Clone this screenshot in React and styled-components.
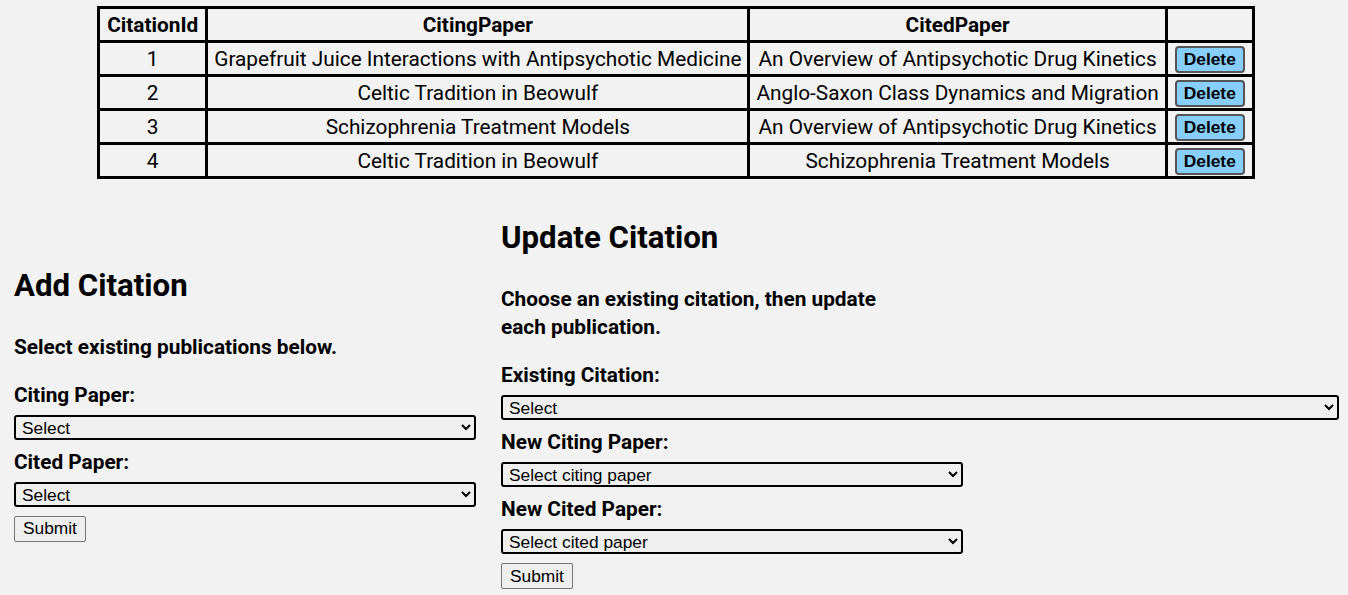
import styled, { createGlobalStyle } from 'styled-components';

const citations = [
    { id: 1, citing: 'Grapefruit Juice Interactions with Antipsychotic Medicine', cited: 'An Overview of Antipsychotic Drug Kinetics' },
    { id: 2, citing: 'Celtic Tradition in Beowulf', cited: 'Anglo-Saxon Class Dynamics and Migration' },
    { id: 3, citing: 'Schizophrenia Treatment Models', cited: 'An Overview of Antipsychotic Drug Kinetics' },
    { id: 4, citing: 'Celtic Tradition in Beowulf', cited: 'Schizophrenia Treatment Models' },
];

export default function App() {
    return (
        <Page>
            <GlobalStyle />
            <Table>
                <thead>
                    <tr>
                        <Th>CitationId</Th>
                        <Th>CitingPaper</Th>
                        <Th>CitedPaper</Th>
                        <Th></Th>
                    </tr>
                </thead>
                <tbody>
                    {citations.map(c => (
                        <tr key={c.id}>
                            <Td>{c.id}</Td>
                            <Td>{c.citing}</Td>
                            <Td>{c.cited}</Td>
                            <Td><DeleteButton>Delete</DeleteButton></Td>
                        </tr>
                    ))}
                </tbody>
            </Table>
            <Forms>
                <LeftColumn>
                    <Title>Add Citation</Title>
                    <Intro>Select existing publications below.</Intro>
                    <Label>Citing Paper:</Label>
                    <Select><option>Select</option></Select>
                    <Label>Cited Paper:</Label>
                    <Select><option>Select</option></Select>
                    <Submit>Submit</Submit>
                </LeftColumn>
                <RightColumn>
                    <Title>Update Citation</Title>
                    <Intro>Choose an existing citation, then update each publication.</Intro>
                    <Label>Existing Citation:</Label>
                    <Select wide><option>Select</option></Select>
                    <Label>New Citing Paper:</Label>
                    <Select><option>Select citing paper</option></Select>
                    <Label>New Cited Paper:</Label>
                    <Select><option>Select cited paper</option></Select>
                    <Submit>Submit</Submit>
                </RightColumn>
            </Forms>
        </Page>
    );
}

const GlobalStyle = createGlobalStyle`
    body {
        margin: 0;
        background-color: #f2f2f2;
        font-family: Roboto, "Liberation Sans", sans-serif;
        font-size: 20.8px;
        line-height: 28px;
        color: #000000;
    }
`;

const Page = styled.div`
    display: flex;
    flex-direction: column;
    padding-left: 4px;
`;

const Table = styled.table`
    margin: 6px auto 0;
    border-collapse: collapse;
    border: 3px solid #000000;
`;

const Th = styled.th`
    border: 3px solid #000000;
    padding: 0 7px;
    height: 31px;
    font-weight: bold;
    text-align: center;
`;

const Td = styled.td`
    border: 3px solid #000000;
    padding: 0 6px;
    height: 31px;
    text-align: center;
    vertical-align: middle;
`;

const DeleteButton = styled.button`
    height: 27px;
    margin: 0 1px;
    font-family: "Liberation Sans", Arial, sans-serif;
    font-size: 17.33px;
    font-weight: bold;
    line-height: 19px;
    padding: 0 7px;
    vertical-align: middle;
    background-color: #87cefa;
    border: 2px solid #555555;
    border-radius: 4px;
    color: #000000;
    cursor: pointer;
`;

const Forms = styled.div`
    display: flex;
    align-items: center;
    gap: 25px;
    margin-top: 12px;
    padding: 0 9px 0 10px;
`;

const LeftColumn = styled.div`
    width: 462px;
    display: flex;
    flex-direction: column;
    align-items: flex-start;
`;

const RightColumn = styled.div`
    flex: 1;
    display: flex;
    flex-direction: column;
    align-items: flex-start;
`;

const Title = styled.h2`
    font-size: 31.2px;
    line-height: 44px;
    font-weight: bold;
    margin: 25px 0;
`;

const Intro = styled.p`
    font-weight: bold;
    max-width: 400px;
    margin: 0 0 20px;
`;

const Label = styled.label`
    display: block;
    font-weight: bold;
`;

const Select = styled.select`
    width: ${props => (props.wide ? '100%' : '462px')};
    height: 25px;
    font-family: "Liberation Sans", Arial, sans-serif;
    font-size: 17.33px;
    padding: 0 2px;
    margin: 6px 0 8px;
    background-color: #efefef;
    border: 2px solid #000000;
    border-radius: 3px;
    color: #000000;
`;

const Submit = styled.button`
    height: 26px;
    font-family: "Liberation Sans", Arial, sans-serif;
    font-size: 17.33px;
    padding: 0 8px;
    margin-top: 1px;
    background-color: #efefef;
    border: 1px solid #767676;
    border-radius: 2px;
    color: #000000;
`;
